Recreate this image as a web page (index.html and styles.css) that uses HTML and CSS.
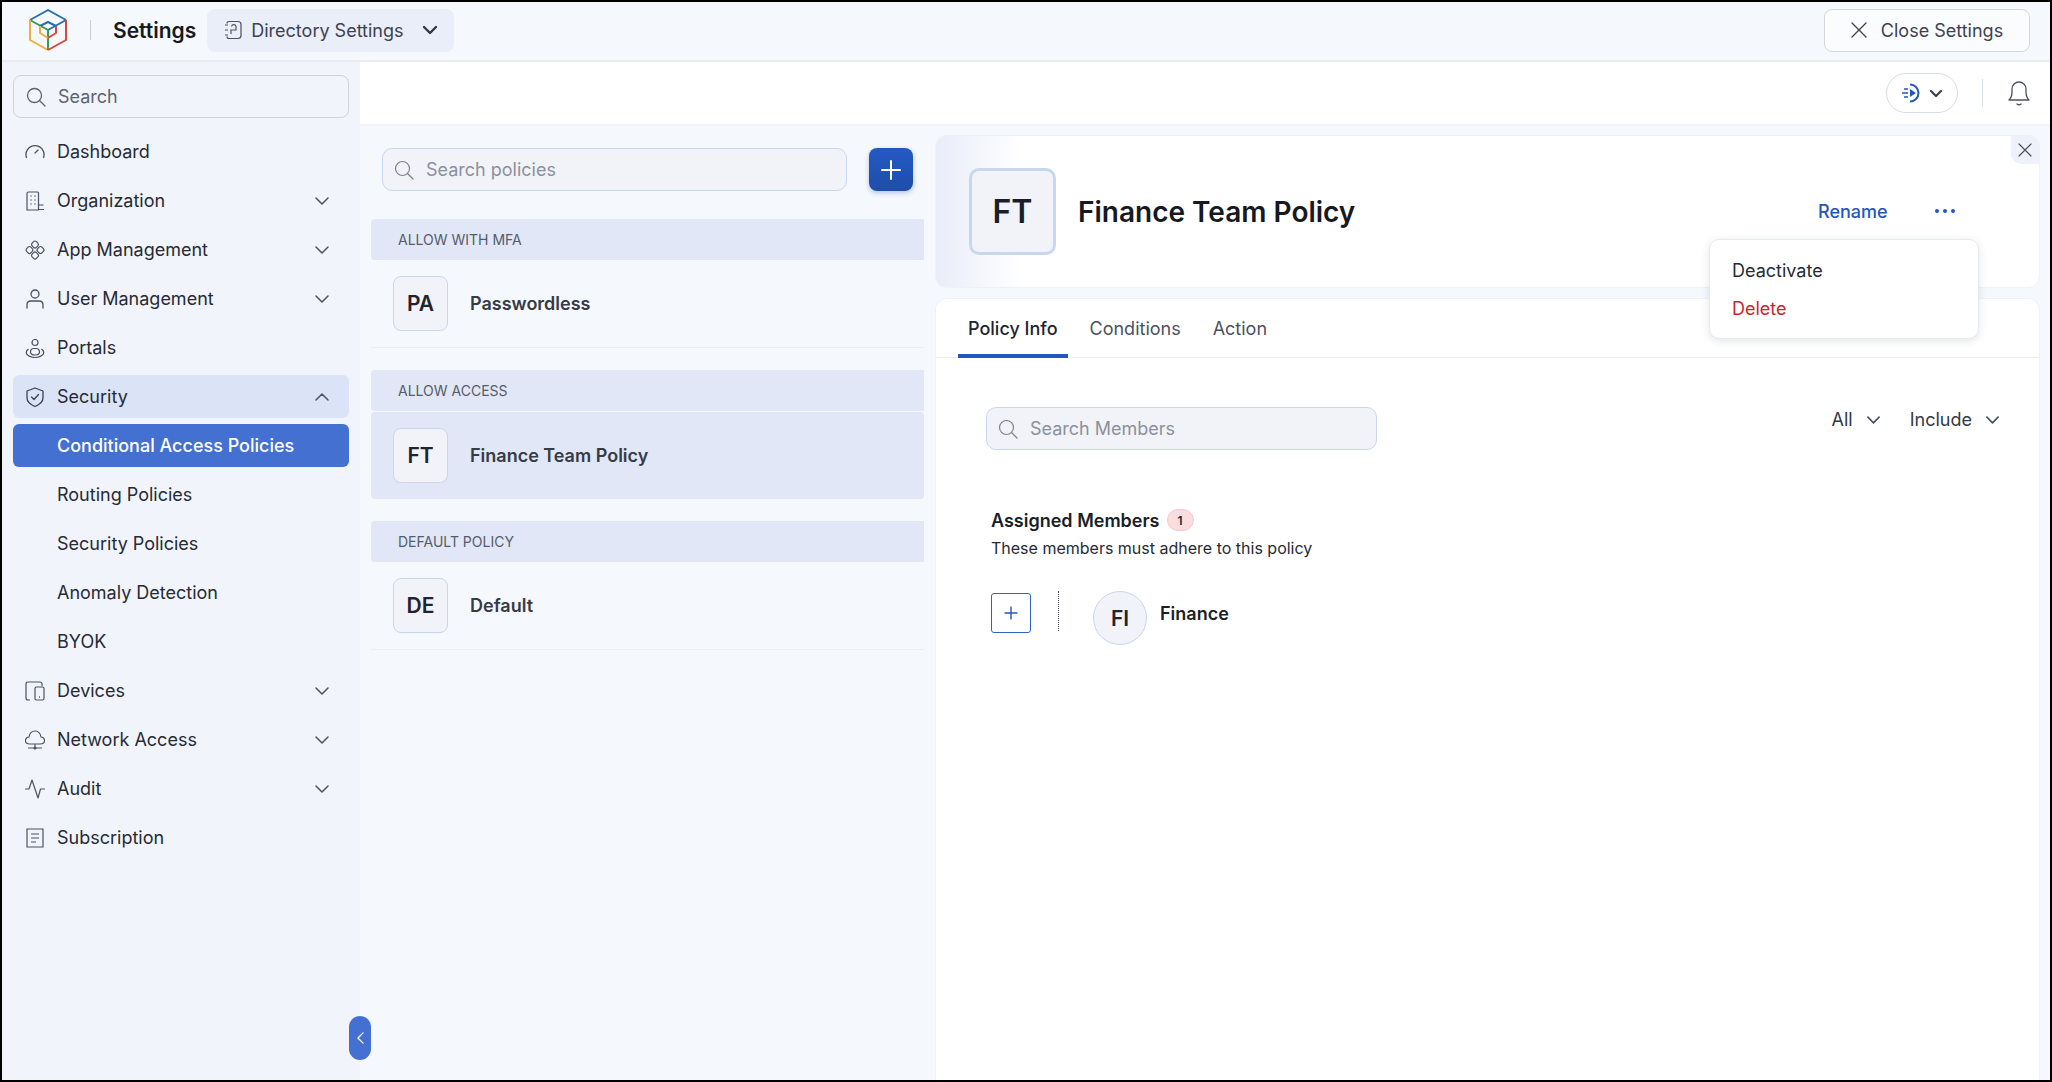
FILE: index.html
```html
<!DOCTYPE html>
<html>
<head>
  <title>Settings</title>
  <link rel="stylesheet" href="styles.css">
</head>
<body>
  <div class="app">
    <header class="topbar">
      <svg class="logo" viewBox="0 0 40 44" fill="none" stroke-width="2" stroke-linejoin="round">
        <path d="M2 12 20 2 38 12" stroke="#2a6fb0"/>
        <path d="M2 12 20 22" stroke="#3a9a5c"/>
        <path d="M38 12 20 22" stroke="#2a6fb0"/>
        <path d="M2 12V32L20 42" stroke="#eeb03c"/>
        <path d="M20 22V42" stroke="#3a9a5c"/>
        <path d="M38 12V32L20 42" stroke="#d9473f"/>
        <path d="M12 18 20 14 28 18" stroke="#2a6fb0"/>
        <path d="M12 18V25L20 30" stroke="#eeb03c"/>
        <path d="M28 18V25L20 30" stroke="#d9473f"/>
      </svg>
      <span class="topbar-divider"></span>
      <span class="topbar-title">Settings</span>
      <div class="dir-select">
        <svg class="icon" viewBox="0 0 20 20" fill="none" stroke="#4b5260" stroke-width="1.2">
          <path d="M4 3.5Q4 1.5 6 1.5H15Q18 1.5 18 4.5V15.500Q18 18.500 15 18.500H6Q4 18.500 4 16.500"/>
          <path d="M2 5H5M2 10H5M2 15H5"/>
          <path d="M8 14V10H13V6.500A2.300 2.300 0 0 0 8.500 6.500"/>
        </svg>
        <span>Directory Settings</span>
        <svg class="chev-strong" viewBox="0 0 16 10" fill="none" stroke="#333a47" stroke-width="2.4" stroke-linecap="round" stroke-linejoin="round"><path d="M2 2 8 8 14 2"/></svg>
      </div>
      <button class="close-settings">
        <svg class="icon-x" viewBox="0 0 16 16" fill="none" stroke="#3c4350" stroke-width="1.3" stroke-linecap="round"><path d="M1 1 15 15M15 1 1 15"/></svg>
        Close Settings
      </button>
    </header>

    <div class="main">
      <aside class="sidebar">
        <div class="side-search">
          <svg class="icon" viewBox="0 0 20 20" fill="none" stroke="#5c6370" stroke-width="1.3" stroke-linecap="round"><circle cx="8.500" cy="8.500" r="7"/><path d="M13.500 13.500 19 19"/></svg>
          <span>Search</span>
        </div>
        <nav class="nav">
          <div class="nav-item">
            <svg class="icon" viewBox="0 0 20 20" fill="none" stroke="#4b5260" stroke-width="1.3" stroke-linecap="round"><path d="M1.500 15.500A9 9 0 1 1 18.500 15.500"/><path d="M10 11 13 8"/></svg>
            <span class="nav-label">Dashboard</span>
          </div>
          <div class="nav-item">
            <svg class="icon" viewBox="0 0 20 20" fill="none" stroke="#4b5260" stroke-width="1.200"><path d="M2 19V2.500Q2 1 3.500 1H12.500Q13.500 1 13.500 2V19ZM13.500 14H18.500M13.500 18.500H19"/><path d="M5.500 5H6.500M9.500 5H10.500M5.500 9H6.500M9.500 9H10.500M5.500 13H6.500M9.500 13H10.500" stroke-width="1.500"/></svg>
            <span class="nav-label">Organization</span>
            <svg class="chev" viewBox="0 0 14 8" fill="none" stroke="#4b5260" stroke-width="1.500" stroke-linecap="round" stroke-linejoin="round"><path d="M1 1 7 7 13 1"/></svg>
          </div>
          <div class="nav-item">
            <svg class="icon" viewBox="0 0 20 20" fill="none" stroke="#4b5260" stroke-width="1.200"><rect x="7" y="1.500" width="6" height="6" rx="2" transform="rotate(45 10 4.500)"/><rect x="1.500" y="7" width="6" height="6" rx="2" transform="rotate(45 4.500 10)"/><rect x="12.500" y="7" width="6" height="6" rx="2" transform="rotate(45 15.500 10)"/><rect x="7" y="12.500" width="6" height="6" rx="2" transform="rotate(45 10 15.500)"/></svg>
            <span class="nav-label">App Management</span>
            <svg class="chev" viewBox="0 0 14 8" fill="none" stroke="#4b5260" stroke-width="1.500" stroke-linecap="round" stroke-linejoin="round"><path d="M1 1 7 7 13 1"/></svg>
          </div>
          <div class="nav-item">
            <svg class="icon" viewBox="0 0 20 20" fill="none" stroke="#4b5260" stroke-width="1.300"><circle cx="10" cy="5" r="4"/><path d="M2 19.500V16Q2 12 6 12H14Q18 12 18 16V19.500"/></svg>
            <span class="nav-label">User Management</span>
            <svg class="chev" viewBox="0 0 14 8" fill="none" stroke="#4b5260" stroke-width="1.500" stroke-linecap="round" stroke-linejoin="round"><path d="M1 1 7 7 13 1"/></svg>
          </div>
          <div class="nav-item">
            <svg class="icon" viewBox="0 0 20 20" fill="none" stroke="#4b5260" stroke-width="1.200"><circle cx="10" cy="4.500" r="3"/><path d="M5.500 14Q5.500 10.500 9 10.500H11Q14.500 10.500 14.500 14Q14.500 17 10 17Q5.500 17 5.500 14Z"/><path d="M3.500 11Q0 13.500 2 16.500Q5 19.500 10 19.500Q15 19.500 18 16.500Q20 13.500 16.500 11"/></svg>
            <span class="nav-label">Portals</span>
          </div>
          <div class="nav-item nav-open">
            <svg class="icon" viewBox="0 0 20 20" fill="none" stroke="#3c4350" stroke-width="1.300" stroke-linejoin="round" stroke-linecap="round"><path d="M10 1 18 4V11Q18 16 10 19.500Q2 16 2 11V4Z"/><path d="M6.500 10 9 12.500 13.500 7.500"/></svg>
            <span class="nav-label">Security</span>
            <svg class="chev" viewBox="0 0 14 8" fill="none" stroke="#4b5260" stroke-width="1.500" stroke-linecap="round" stroke-linejoin="round"><path d="M1 7 7 1 13 7"/></svg>
          </div>
          <div class="nav-item nav-active"><span class="nav-label">Conditional Access Policies</span></div>
          <div class="nav-item"><span class="nav-label">Routing Policies</span></div>
          <div class="nav-item"><span class="nav-label">Security Policies</span></div>
          <div class="nav-item"><span class="nav-label">Anomaly Detection</span></div>
          <div class="nav-item"><span class="nav-label">BYOK</span></div>
          <div class="nav-item">
            <svg class="icon" viewBox="0 0 20 20" fill="none" stroke="#4b5260" stroke-width="1.200"><path d="M5 19H3Q1 19 1 17V3Q1 1 3 1H15Q17 1 17 3V5"/><rect x="10" y="6" width="9" height="13" rx="1.500"/><path d="M14 16H15" stroke-width="1.500"/></svg>
            <span class="nav-label">Devices</span>
            <svg class="chev" viewBox="0 0 14 8" fill="none" stroke="#4b5260" stroke-width="1.500" stroke-linecap="round" stroke-linejoin="round"><path d="M1 1 7 7 13 1"/></svg>
          </div>
          <div class="nav-item">
            <svg class="icon" viewBox="0 0 20 20" fill="none" stroke="#4b5260" stroke-width="1.200"><path d="M5 14Q0 14 0.500 10Q1 7 4 7Q5 1 10 1Q15 1 16 7Q19 7 19.500 10Q20 14 15 14Z"/><path d="M10 14V18M3 18H17"/><circle cx="10" cy="18" r="1" fill="#4b5260"/></svg>
            <span class="nav-label">Network Access</span>
            <svg class="chev" viewBox="0 0 14 8" fill="none" stroke="#4b5260" stroke-width="1.500" stroke-linecap="round" stroke-linejoin="round"><path d="M1 1 7 7 13 1"/></svg>
          </div>
          <div class="nav-item">
            <svg class="icon" viewBox="0 0 20 20" fill="none" stroke="#4b5260" stroke-width="1.200" stroke-linejoin="round" stroke-linecap="round"><path d="M0.500 10H4L7 1 13 19 15.500 10H19.500"/></svg>
            <span class="nav-label">Audit</span>
            <svg class="chev" viewBox="0 0 14 8" fill="none" stroke="#4b5260" stroke-width="1.500" stroke-linecap="round" stroke-linejoin="round"><path d="M1 1 7 7 13 1"/></svg>
          </div>
          <div class="nav-item">
            <svg class="icon" viewBox="0 0 20 20" fill="none" stroke="#4b5260" stroke-width="1.200"><path d="M2 1H18V19H2Z" stroke-dasharray="18 0"/><path d="M6 6H14M6 10H14M6 14H11"/></svg>
            <span class="nav-label">Subscription</span>
          </div>
        </nav>
        <div class="collapse-handle">
          <svg viewBox="0 0 8 14" fill="none" stroke="#fff" stroke-width="1.500" stroke-linecap="round" stroke-linejoin="round"><path d="M7 1 1 7 7 13"/></svg>
        </div>
      </aside>

      <div class="content">
        <div class="toolbar">
          <div class="play-pill">
            <svg class="play-icon" viewBox="0 0 22 20" fill="none" stroke="#2257bd" stroke-width="2"><path d="M9 1.500A8.500 8.500 0 1 1 9 18.500"/><path d="M9 6 15 10 9 14Z" fill="#2257bd" stroke="none"/><path d="M3 6H7M1 10H7M3 14H7" stroke-width="1.300"/></svg>
            <svg class="chev-small" viewBox="0 0 14 9" fill="none" stroke="#3c4350" stroke-width="2.200" stroke-linecap="round" stroke-linejoin="round"><path d="M2 2 7 7 12 2"/></svg>
          </div>
          <span class="toolbar-divider"></span>
          <svg class="bell" viewBox="0 0 22 26" fill="none" stroke="#4b5260" stroke-width="1.300" stroke-linejoin="round"><path d="M1 20Q4 17 4 12V9A7 7 0 0 1 18 9V12Q18 17 21 20Z"/><path d="M9 24Q11 25.500 13 24" stroke-linecap="round"/></svg>
        </div>

        <div class="workspace">
          <section class="list-pane">
            <div class="list-search-row">
              <div class="field">
                <svg class="icon" viewBox="0 0 20 20" fill="none" stroke="#7b828f" stroke-width="1.200" stroke-linecap="round"><circle cx="8.500" cy="8.500" r="7"/><path d="M13.500 13.500 19 19"/></svg>
                <span>Search policies</span>
              </div>
              <button class="add-btn">
                <svg viewBox="0 0 20 20" fill="none" stroke="#fff" stroke-width="2" stroke-linecap="round"><path d="M10 1V19M1 10H19"/></svg>
              </button>
            </div>

            <div class="group-head">ALLOW WITH MFA</div>
            <div class="policy-row">
              <div class="avatar">PA</div>
              <span class="policy-name">Passwordless</span>
            </div>

            <div class="group-head">ALLOW ACCESS</div>
            <div class="policy-row selected">
              <div class="avatar">FT</div>
              <span class="policy-name">Finance Team Policy</span>
            </div>

            <div class="group-head">DEFAULT POLICY</div>
            <div class="policy-row">
              <div class="avatar">DE</div>
              <span class="policy-name">Default</span>
            </div>
          </section>

          <section class="detail-pane">
            <div class="detail-head">
              <div class="avatar-large">FT</div>
              <h1 class="detail-title">Finance Team Policy</h1>
              <a class="rename">Rename</a>
              <div class="dots"><i></i><i></i><i></i></div>
              <div class="detail-close">
                <svg viewBox="0 0 14 14" fill="none" stroke="#4b5260" stroke-width="1.200" stroke-linecap="round"><path d="M1 1 13 13M13 1 1 13"/></svg>
              </div>
              <div class="popup-menu">
                <div class="popup-item">Deactivate</div>
                <div class="popup-item danger">Delete</div>
              </div>
            </div>

            <div class="detail-card">
              <div class="tabs">
                <div class="tab tab-active">Policy Info</div>
                <div class="tab">Conditions</div>
                <div class="tab">Action</div>
              </div>

              <div class="member-tools">
                <div class="field member-search">
                  <svg class="icon" viewBox="0 0 20 20" fill="none" stroke="#7b828f" stroke-width="1.200" stroke-linecap="round"><circle cx="8.500" cy="8.500" r="7"/><path d="M13.500 13.500 19 19"/></svg>
                  <span>Search Members</span>
                </div>
                <div class="filters">
                  <div class="filter">All <svg class="chev" viewBox="0 0 14 8" fill="none" stroke="#4b5260" stroke-width="1.800" stroke-linecap="round" stroke-linejoin="round"><path d="M1 1 7 7 13 1"/></svg></div>
                  <div class="filter">Include <svg class="chev" viewBox="0 0 14 8" fill="none" stroke="#4b5260" stroke-width="1.800" stroke-linecap="round" stroke-linejoin="round"><path d="M1 1 7 7 13 1"/></svg></div>
                </div>
              </div>

              <div class="members">
                <div class="members-title">Assigned Members <span class="count">1</span></div>
                <div class="members-sub">These members must adhere to this policy</div>
                <div class="member-row">
                  <button class="member-add">
                    <svg viewBox="0 0 14 14" fill="none" stroke="#2257bd" stroke-width="1.400" stroke-linecap="round"><path d="M7 1V13M1 7H13"/></svg>
                  </button>
                  <span class="dotted"></span>
                  <div class="member-avatar">FI</div>
                  <span class="member-name">Finance</span>
                </div>
              </div>
            </div>
          </section>
        </div>
      </div>
    </div>
  </div>
</body>
</html>
```

FILE: styles.css
```css
* {
  box-sizing: border-box;
}
html, body {
  margin: 0;
  height: 100%;
}
body {
  font-family: Inter, "Noto Sans", sans-serif;
  color: #1f2430;
  overflow: hidden;
}
button {
  font-family: inherit;
  cursor: pointer;
}
.app {
  height: 100vh;
  border: 2px solid #000;
  display: flex;
  flex-direction: column;
  background: #f5f8fd;
}
.icon {
  width: 20px;
  height: 20px;
  flex: none;
}

/* top bar */
.topbar {
  height: 60px;
  flex: none;
  display: flex;
  align-items: center;
  padding: 0 20px 2px 26px;
  background: #f5f8fd;
  border-bottom: 2px solid #e8ebf0;
}
.logo {
  width: 40px;
  height: 44px;
}
.topbar-divider {
  width: 1px;
  height: 20px;
  background: #c9ced6;
  margin: 0 22px;
}
.topbar-title {
  font-size: 21px;
  font-weight: 600;
  color: #16191f;
}
.dir-select {
  height: 43px;
  width: 247px;
  margin-left: 11px;
  padding: 0 16px;
  display: flex;
  align-items: center;
  gap: 8px;
  background: #e9eef9;
  border-radius: 8px;
  font-size: 18px;
  color: #3c4350;
}
.chev-strong {
  width: 16px;
  height: 10px;
  margin-left: auto;
}
.close-settings {
  margin-left: auto;
  width: 206px;
  height: 43px;
  display: flex;
  align-items: center;
  justify-content: center;
  gap: 14px;
  background: #fbfcfe;
  border: 1px solid #d3d7de;
  border-radius: 8px;
  font-size: 18px;
  color: #3c4350;
}
.icon-x {
  width: 16px;
  height: 16px;
}

.main {
  flex: 1;
  display: flex;
  min-height: 0;
}

/* sidebar */
.sidebar {
  width: 358px;
  flex: none;
  position: relative;
  background: #f1f4fa;
  padding: 13px 11px 0;
}
.side-search {
  height: 43px;
  display: flex;
  align-items: center;
  gap: 12px;
  padding: 0 12px;
  border: 1px solid #cfd3da;
  border-radius: 8px;
  background: #f1f4fa;
  font-size: 18px;
  color: #5c6370;
}
.nav {
  margin-top: 12px;
  display: flex;
  flex-direction: column;
  gap: 6px;
}
.nav-item {
  height: 43px;
  display: flex;
  align-items: center;
  padding: 0 20px 0 12px;
  border-radius: 6px;
  font-size: 18px;
  color: #262b36;
}
.nav-label {
  margin-left: 12px;
}
.nav-item .chev {
  width: 14px;
  height: 8px;
  margin-left: auto;
}
.nav-open {
  background: #dbe4f6;
}
.nav-active {
  background: #4470d2;
  color: #fff;
  font-weight: 500;
}
.nav-active .nav-label,
.nav-item > .nav-label:first-child {
  margin-left: 32px;
}
.collapse-handle {
  position: absolute;
  right: -11px;
  bottom: 20px;
  width: 22px;
  height: 44px;
  border-radius: 11px;
  background: #4470d2;
  display: flex;
  align-items: center;
  justify-content: center;
}
.collapse-handle svg {
  width: 7px;
  height: 12px;
}

/* toolbar */
.content {
  flex: 1;
  min-width: 0;
  display: flex;
  flex-direction: column;
}
.toolbar {
  height: 64px;
  flex: none;
  display: flex;
  align-items: center;
  justify-content: flex-end;
  padding: 0 20px 0 0;
  background: #fff;
  border-bottom: 2px solid #f0f3f8;
}
.play-pill {
  width: 72px;
  height: 40px;
  border: 1px solid #d8dce3;
  border-radius: 20px;
  display: flex;
  align-items: center;
  justify-content: center;
  gap: 6px;
}
.play-icon {
  width: 22px;
  height: 20px;
}
.chev-small {
  width: 14px;
  height: 9px;
}
.toolbar-divider {
  width: 1px;
  height: 28px;
  background: #d8dce3;
  margin: 0 25px 0 24px;
}
.bell {
  width: 22px;
  height: 26px;
}

.workspace {
  flex: 1;
  min-height: 0;
  display: flex;
}

/* policy list */
.list-pane {
  width: 575px;
  flex: none;
  padding: 22px 11px 0 11px;
}
.list-search-row {
  display: flex;
  gap: 22px;
  padding: 0 11px;
  margin-bottom: 28px;
}
.field {
  height: 43px;
  flex: 1;
  display: flex;
  align-items: center;
  gap: 12px;
  padding: 0 11px;
  background: #f1f3f9;
  border: 1px solid #c9d6f0;
  border-radius: 10px;
  font-size: 18px;
  color: #8b919c;
}
.add-btn {
  width: 44px;
  height: 43px;
  flex: none;
  padding: 0;
  border: none;
  border-radius: 8px;
  background: linear-gradient(#2459c4, #1f4da8);
  box-shadow: 0 2px 5px rgba(31, 77, 168, 0.3);
  display: flex;
  align-items: center;
  justify-content: center;
}
.add-btn svg {
  width: 20px;
  height: 20px;
}
.group-head {
  height: 41px;
  display: flex;
  align-items: center;
  padding-left: 27px;
  background: #e1e7f7;
  border-radius: 4px 0 0 4px;
  font-size: 14px;
  color: #555c69;
}
.policy-row {
  height: 88px;
  margin-bottom: 22px;
  display: flex;
  align-items: center;
  padding-left: 22px;
  border-bottom: 1px solid #ebeef4;
}
.policy-row.selected {
  height: 87px;
  margin-top: 1px;
  background: #e1e7f7;
  border: none;
  border-radius: 4px;
}
.avatar {
  width: 55px;
  height: 55px;
  display: flex;
  align-items: center;
  justify-content: center;
  background: #f1f3f9;
  border: 1px solid #c9d6f0;
  border-radius: 8px;
  font-size: 21px;
  font-weight: 600;
  color: #1f2430;
}
.policy-name {
  margin-left: 22px;
  font-size: 18px;
  font-weight: 600;
  color: #363b46;
}

/* detail */
.detail-pane {
  flex: 1;
  min-width: 0;
  padding: 9px 10px 0 0;
  display: flex;
  flex-direction: column;
  gap: 10px;
}
.detail-head {
  height: 153px;
  flex: none;
  position: relative;
  display: flex;
  align-items: center;
  padding: 0 0 0 33px;
  border: 1px solid #eef1f6;
  border-radius: 12px;
  background: linear-gradient(90deg, #e9edf9 0, #fff 85px);
}
.avatar-large {
  width: 87px;
  height: 87px;
  display: flex;
  align-items: center;
  justify-content: center;
  background: #f1f3f9;
  border: 3px solid #c9d6f0;
  border-radius: 10px;
  font-size: 32px;
  font-weight: 600;
  color: #1a1e28;
}
.detail-title {
  margin: 0 0 0 22px;
  font-size: 28px;
  font-weight: 600;
  color: #16191f;
}
.rename {
  position: absolute;
  left: 882px;
  top: 65px;
  font-size: 18px;
  font-weight: 500;
  color: #2257bd;
}
.dots {
  position: absolute;
  left: 999px;
  top: 73px;
  display: flex;
  gap: 4px;
}
.dots i {
  width: 4px;
  height: 4px;
  border-radius: 50%;
  background: #2257bd;
}
.detail-close {
  position: absolute;
  top: 0;
  right: 0;
  width: 28px;
  height: 28px;
  background: #eef1f9;
  border-radius: 0 10px 0 10px;
  display: flex;
  align-items: center;
  justify-content: center;
}
.detail-close svg {
  width: 14px;
  height: 14px;
}
.popup-menu {
  position: absolute;
  z-index: 5;
  left: 773px;
  top: 103px;
  width: 270px;
  height: 100px;
  padding: 11px 0;
  background: #fff;
  border: 1px solid #e6e9ef;
  border-radius: 10px;
  box-shadow: 0 2px 8px rgba(30, 40, 70, 0.12);
}
.popup-item {
  height: 38px;
  display: flex;
  align-items: center;
  padding-left: 22px;
  font-size: 18px;
  color: #262b36;
}
.popup-item.danger {
  color: #c9252d;
}
.detail-card {
  flex: 1;
  background: #fff;
  border: 1px solid #eef1f6;
  border-bottom: none;
  border-radius: 12px 12px 0 0;
}
.tabs {
  height: 59px;
  margin: 0 0 0 0;
  padding: 0 0 0 22px;
  display: flex;
  gap: 0;
  border-bottom: 1px solid #e9ecf1;
}
.tab {
  height: 59px;
  padding: 0 10px;
  margin-right: 12px;
  display: flex;
  align-items: center;
  font-size: 18px;
  color: #4b5260;
}
.tab-active {
  font-weight: 500;
  color: #1f2430;
  border-bottom: 4px solid #2257bd;
  padding-top: 4px;
}
.member-tools {
  display: flex;
  justify-content: space-between;
  align-items: flex-start;
  padding: 49px 40px 0 50px;
}
.member-search {
  flex: none;
  width: 391px;
}
.filters {
  display: flex;
  gap: 30px;
  padding-top: 2px;
}
.filter {
  display: flex;
  align-items: center;
  gap: 14px;
  font-size: 18px;
  color: #333a47;
}
.filter .chev {
  width: 13px;
  height: 8px;
}
.members {
  padding: 59px 0 0 55px;
}
.members-title {
  display: flex;
  align-items: center;
  gap: 7px;
  font-size: 18px;
  font-weight: 600;
  color: #1a1e28;
}
.count {
  width: 27px;
  height: 22px;
  display: flex;
  align-items: center;
  justify-content: center;
  background: #fbdde0;
  border: 1px solid #f6c9ce;
  border-radius: 11px;
  font-size: 12px;
  font-weight: 600;
  color: #1f2430;
}
.members-sub {
  margin-top: 7px;
  font-size: 16px;
  color: #262b36;
}
.member-row {
  margin-top: 33px;
  display: flex;
  align-items: flex-start;
}
.member-add {
  width: 40px;
  height: 40px;
  margin-top: 2px;
  padding: 0;
  background: #fff;
  border: 1px solid #2f62c2;
  border-radius: 3px;
  display: flex;
  align-items: center;
  justify-content: center;
}
.member-add svg {
  width: 14px;
  height: 14px;
}
.dotted {
  height: 40px;
  margin-left: 27px;
  border-left: 1px dotted #4b5260;
}
.member-avatar {
  width: 54px;
  height: 54px;
  margin-left: 34px;
  display: flex;
  align-items: center;
  justify-content: center;
  background: #f1f3f9;
  border: 1px solid #c9d6f0;
  border-radius: 50%;
  font-size: 21px;
  font-weight: 600;
  color: #1f2430;
}
.member-name {
  margin: 12px 0 0 13px;
  font-size: 18px;
  font-weight: 600;
  color: #1a1e28;
}
```
